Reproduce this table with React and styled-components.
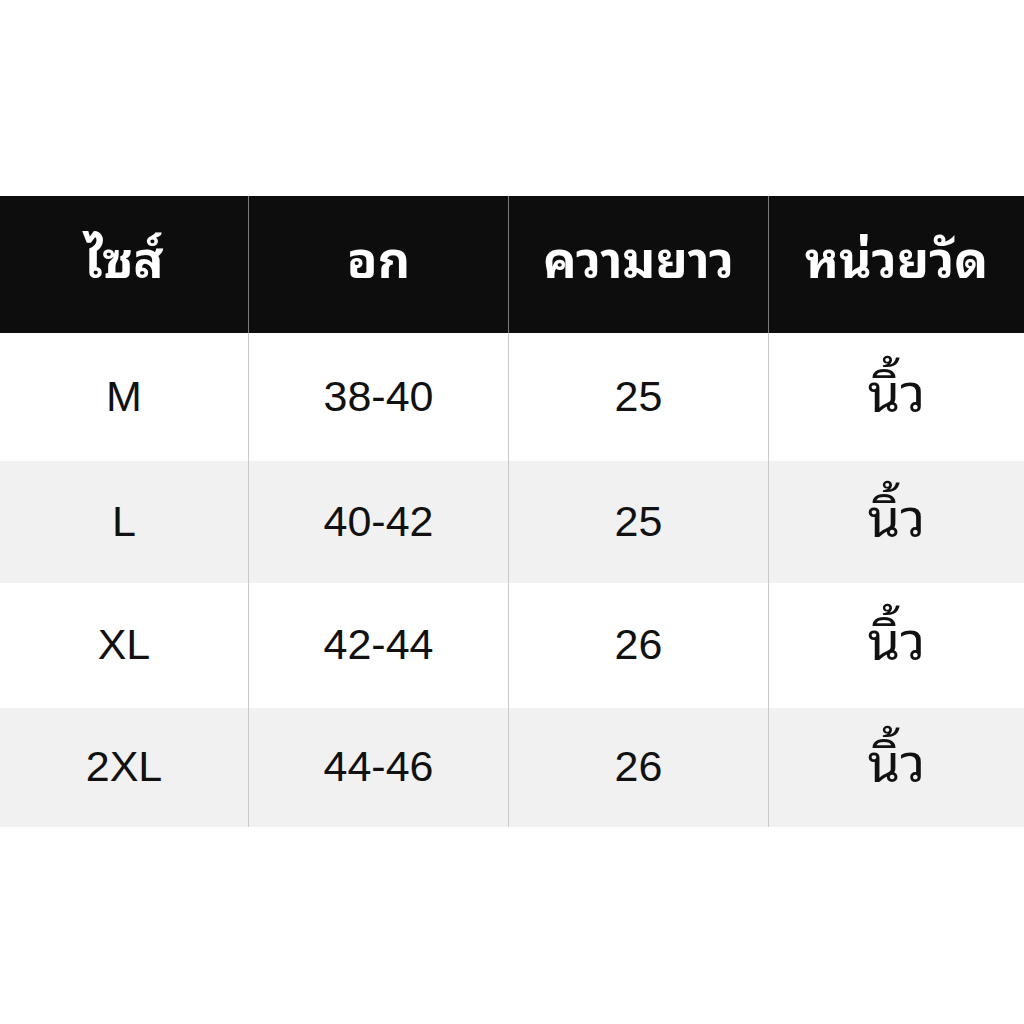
import React from "react";
import styled, { createGlobalStyle } from "styled-components";

const GlobalStyle = createGlobalStyle`
	html, body {
		margin: 0;
		padding: 0;
		background: #fff;
	}
`;

const thaiFont = `Tahoma, "Noto Sans Thai Looped", Loma, Garuda, "Noto Sans Thai", "Noto Sans", "DejaVu Sans", sans-serif`;

const headers = ["ไซส์", "อก", "ความยาว", "หน่วยวัด"];

const rows = [
	{ size: "M", chest: "38-40", length: "25", height: 128 },
	{ size: "L", chest: "40-42", length: "25", height: 122 },
	{ size: "XL", chest: "42-44", length: "26", height: 125 },
	{ size: "2XL", chest: "44-46", length: "26", height: 119 },
];

const SizeChart = () => {
	return (
		<Page>
			<GlobalStyle />
			<Table>
				<HeadRow>
					{headers.map((h) => (
						<HeadCell key={h}>{h}</HeadCell>
					))}
				</HeadRow>
				{rows.map((r, i) => (
					<BodyRow key={r.size} $striped={i % 2 === 1} $h={r.height}>
						<Cell>{r.size}</Cell>
						<Cell>{r.chest}</Cell>
						<Cell>{r.length}</Cell>
						<Cell $thai>นิ้ว</Cell>
					</BodyRow>
				))}
			</Table>
		</Page>
	);
};

const Page = styled.div`
	width: 1024px;
	height: 1024px;
	padding-top: 196px;
	box-sizing: border-box;
	background: #fff;
`;

const Table = styled.div`
	display: flex;
	flex-direction: column;
	width: 1024px;
`;

const grid = `
	display: grid;
	grid-template-columns: 248px 260px 260px 256px;
`;

const HeadRow = styled.div`
	${grid}
	height: 137px;
	background: #0d0d0d;
`;

const HeadCell = styled.div`
	display: flex;
	align-items: center;
	justify-content: center;
	color: #fff;
	font-family: ${thaiFont};
	font-weight: 700;
	font-size: 50px;
	padding-bottom: 18px;
	border-left: 1px solid #7a7a7a;
	&:first-child {
		border-left: none;
	}
`;

const BodyRow = styled.div`
	${grid}
	height: ${(p) => p.$h}px;
	background: ${(p) => (p.$striped ? "#f1f1f1" : "#fff")};
`;

const Cell = styled.div`
	display: flex;
	align-items: center;
	justify-content: center;
	color: #111;
	font-family: ${(p) => (p.$thai ? thaiFont : `"Liberation Sans", Arial, sans-serif`)};
	font-size: ${(p) => (p.$thai ? "52px" : "43px")};
	padding-bottom: ${(p) => (p.$thai ? "18px" : "2px")};
	border-left: 1px solid #c9c9c9;
	&:first-child {
		border-left: none;
	}
`;

export default SizeChart;
